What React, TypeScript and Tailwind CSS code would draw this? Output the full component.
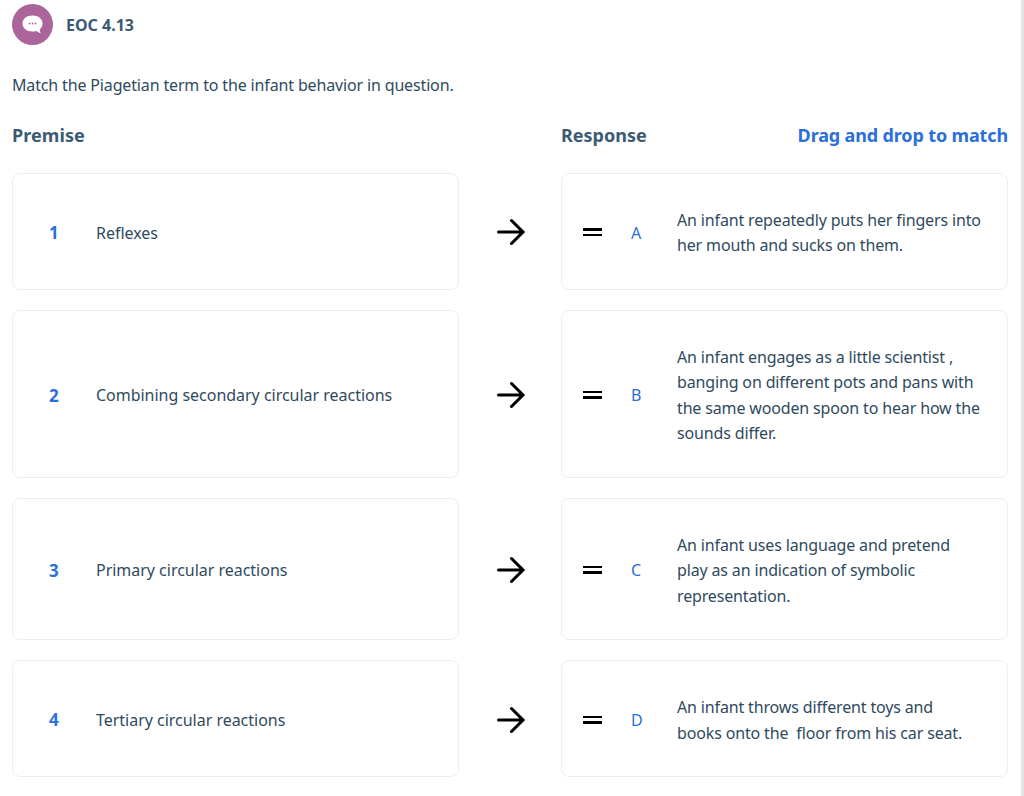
const rows = [
  { n: "1", term: "Reflexes", l: "A", lines: ["An infant repeatedly puts her fingers into", "her mouth and sucks on them."] },
  { n: "2", term: "Combining secondary circular reactions", l: "B", lines: ["An infant engages as a little scientist ,", "banging on different pots and pans with", "the same wooden spoon to hear how the", "sounds differ."] },
  { n: "3", term: "Primary circular reactions", l: "C", lines: ["An infant uses language and pretend", "play as an indication of symbolic", "representation."] },
  { n: "4", term: "Tertiary circular reactions", l: "D", lines: ["An infant throws different toys and", "books onto the  floor from his car seat."] },
];

export default function App() {
  return (
    <div className="relative w-[1024px] h-[796px] overflow-hidden bg-white text-[#2f4a60] font-['Noto_Sans',sans-serif] text-[16px] tracking-[-0.15px]">
      <div className="absolute right-0 top-0 bottom-0 w-[3px] bg-[#e3e3e3]" />
      <div className="pl-3 pr-4 pt-1">
        <div className="flex items-center gap-[13px] h-[41px]">
          <div className="w-[41px] h-[41px] rounded-full bg-[#ab659b] flex items-center justify-center">
            <svg width="24" height="24" viewBox="0 0 24 24">
              <path d="M11.500 2.500c5.900 0 10 3.400 10 8 0 2.500-1.100 4.500-2.800 5.900l.9 4.100-4.300-2.500c-1.200.4-2.500.5-3.800.5-5.900 0-10-3.400-10-8s4.100-8 10-8z" fill="#fff" />
              <circle cx="8.500" cy="10.500" r="0.900" fill="#ab659b" />
              <circle cx="11.500" cy="10.500" r="0.900" fill="#ab659b" />
              <circle cx="14.500" cy="10.500" r="0.900" fill="#ab659b" />
            </svg>
          </div>
          <div className="font-bold text-[#3c5a73] text-[16px] tracking-normal">EOC 4.13</div>
        </div>
        <p className="mt-[27px] h-[26px] leading-[26px]">Match the Piagetian term to the infant behavior in question.</p>
        <div className="mt-[24px] mb-[25px] flex h-[26px] items-center font-bold text-[18px] text-[#3c5a73]">
          <div className="w-[549px] tracking-[0.07px]">Premise</div>
          <div className="flex-1 flex justify-between">
            <span className="tracking-normal">Response</span>
            <span className="text-[#2a6fdb] tracking-[-0.14px]">Drag and drop to match</span>
          </div>
        </div>
        <div className="mt-[24px] flex flex-col gap-5">
          {rows.map((r) => (
            <div key={r.n} className="flex items-stretch">
              <div className="w-[447px] rounded-lg border border-[#eceef0] flex items-center pt-[3px]">
                <span className="w-[83px] pl-[36px] font-bold text-[17px] text-[#2a6fdb]">{r.n}</span>
                <span className="tracking-[-0.02px]">{r.term}</span>
              </div>
              <div className="w-[102px] pl-[1px] pt-[2px] flex items-center justify-center">
                <svg width="30" height="30" viewBox="0 0 30 30" fill="none" stroke="#000" strokeWidth="3" strokeLinecap="round" strokeLinejoin="miter">
                  <path d="M2.500 15h24M15.500 3.500L27 15 15.500 26.500" />
                </svg>
              </div>
              <div className="w-[447px] rounded-lg border border-[#eceef0] flex items-center pt-[34px] pb-[30px]">
                <div className="w-[19px] ml-[21px] flex flex-col gap-[3px] mt-[-2px]">
                  <div className="h-[2.500px] bg-black" />
                  <div className="h-[2.500px] bg-black" />
                </div>
                <span className="w-[75px] pl-[29px] text-[#2a6fdb] mt-[-1px]">{r.l}</span>
                <div className="leading-[25.45px] whitespace-pre">
                  {r.lines.map((t) => (
                    <div key={t}>{t}</div>
                  ))}
                </div>
              </div>
            </div>
          ))}
        </div>
      </div>
    </div>
  );
}
